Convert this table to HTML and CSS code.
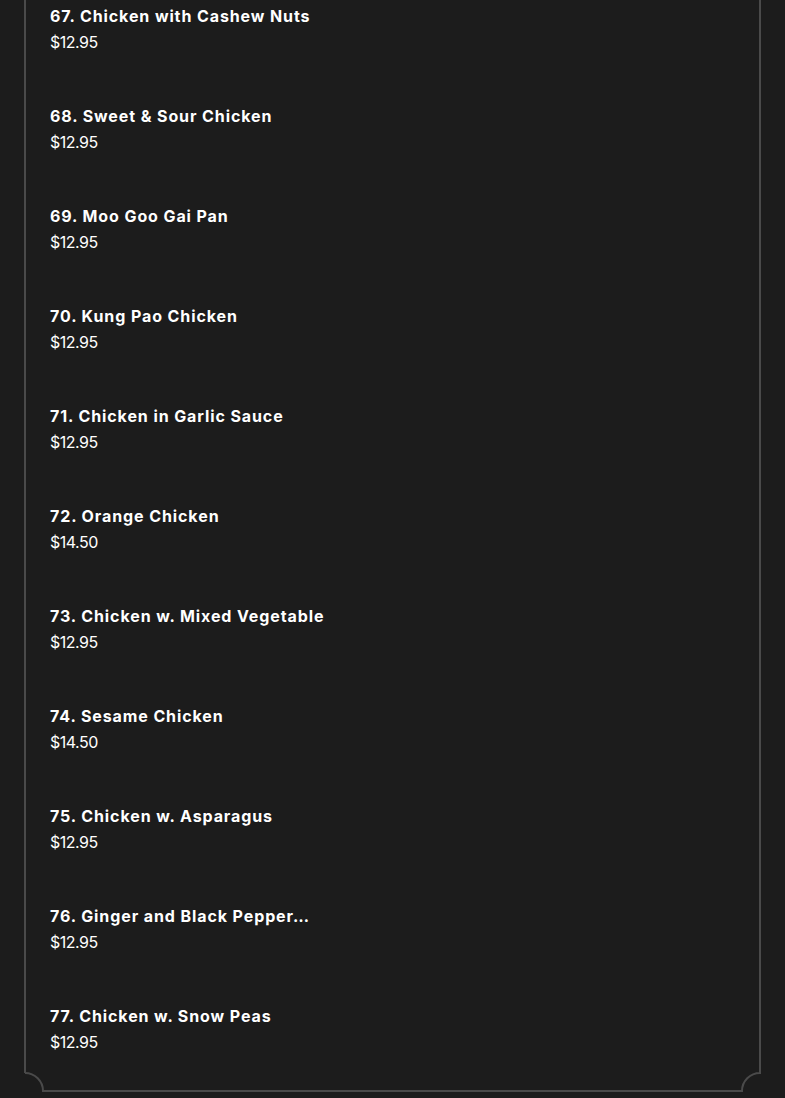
FILE: index.html
```html
<!DOCTYPE html>
<html lang="en">
<head>
<meta charset="utf-8">
<title>Menu</title>
<link rel="stylesheet" href="styles.css">
</head>
<body>
<div class="frame">
  <ul class="menu">
    <li class="item"><div class="name">67. Chicken with Cashew Nuts</div><div class="price">$12.95</div></li>
    <li class="item"><div class="name">68. Sweet &amp; Sour Chicken</div><div class="price">$12.95</div></li>
    <li class="item"><div class="name">69. Moo Goo Gai Pan</div><div class="price">$12.95</div></li>
    <li class="item"><div class="name">70. Kung Pao Chicken</div><div class="price">$12.95</div></li>
    <li class="item"><div class="name">71. Chicken in Garlic Sauce</div><div class="price">$12.95</div></li>
    <li class="item"><div class="name">72. Orange Chicken</div><div class="price">$14.50</div></li>
    <li class="item"><div class="name">73. Chicken w. Mixed Vegetable</div><div class="price">$12.95</div></li>
    <li class="item"><div class="name">74. Sesame Chicken</div><div class="price">$14.50</div></li>
    <li class="item"><div class="name">75. Chicken w. Asparagus</div><div class="price">$12.95</div></li>
    <li class="item"><div class="name">76. Ginger and Black Pepper…</div><div class="price">$12.95</div></li>
    <li class="item"><div class="name">77. Chicken w. Snow Peas</div><div class="price">$12.95</div></li>
  </ul>
  <svg class="corner corner-left" width="22" height="22" viewBox="0 0 22 22"><rect x="0" y="0" width="22" height="22" fill="#1c1c1c"/><path d="M1 3 A18 18 0 0 1 19 21 L22 21" fill="none" stroke="#4a4a4a" stroke-width="2"/><path d="M1 0 L1 3" stroke="#4a4a4a" stroke-width="2"/></svg>
  <svg class="corner corner-right" width="22" height="22" viewBox="0 0 22 22"><rect x="0" y="0" width="22" height="22" fill="#1c1c1c"/><path d="M21 0 L21 3 A18 18 0 0 0 3 21 L0 21" fill="none" stroke="#4a4a4a" stroke-width="2"/></svg>
</div>
</body>
</html>
```
FILE: styles.css
```css
html, body {
  margin: 0;
  padding: 0;
  background: #1c1c1c;
}
body {
  height: 1098px;
  overflow: hidden;
  font-family: Inter, "Noto Sans", sans-serif;
  color: #ffffff;
}
.frame {
  position: relative;
  margin-left: 24px;
  width: 733px;
  height: 1090px;
  border-left: 2px solid #4a4a4a;
  border-right: 2px solid #4a4a4a;
  border-bottom: 2px solid #4a4a4a;
}
.menu {
  list-style: none;
  margin: 0;
  padding: 6px 0 0 24px;
}
.item {
  height: 100px;
}
.name {
  font-size: 16px;
  line-height: 20px;
  font-weight: 700;
  letter-spacing: 0.9px;
}
.price {
  margin-top: 6px;
  font-size: 16px;
  line-height: 20px;
  font-weight: 400;
  letter-spacing: -0.5px;
}
.corner {
  position: absolute;
  bottom: -2px;
}
.corner-left { left: -2px; }
.corner-right { right: -2px; }
```
